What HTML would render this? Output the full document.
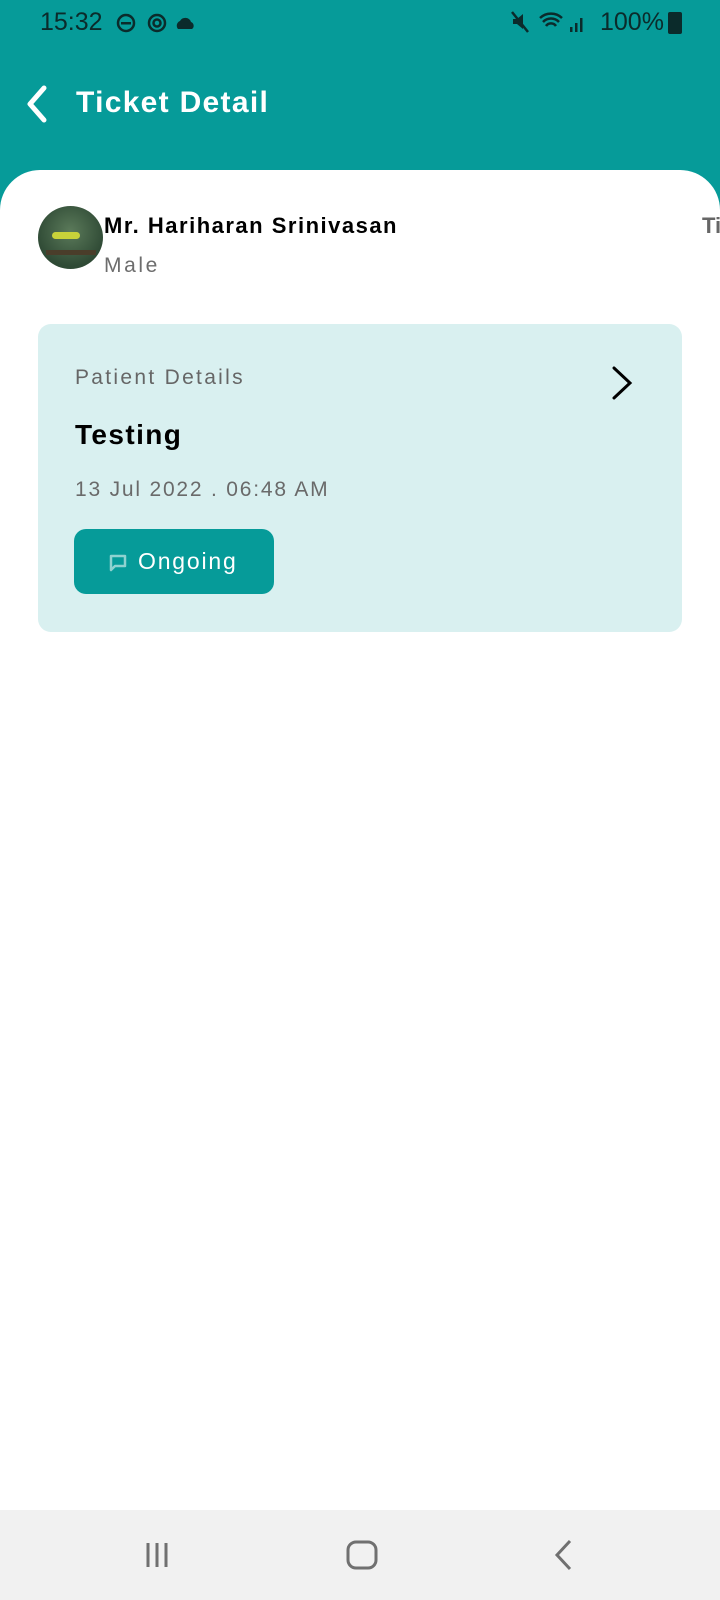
<!DOCTYPE html>
<html><head><meta charset="utf-8"><style>
*{margin:0;padding:0;box-sizing:border-box}
body{width:720px;height:1600px;position:relative;background:#fff;font-family:"Liberation Sans",sans-serif;overflow:hidden}
.top{position:absolute;left:0;top:0;width:720px;height:220px;background:#069b99}
.sheet{position:absolute;left:0;top:170px;width:720px;height:1340px;background:#fff;border-radius:40px 40px 0 0}
.abs{position:absolute;white-space:nowrap}
</style></head><body>
<div class="top"></div>
<div class="abs" style="left:40px;top:8px;font-size:25px;color:#0b2b2b">15:32</div>
<svg class="abs" style="left:115px;top:12px" width="90" height="24" viewBox="0 0 90 24">
<circle cx="11" cy="11" r="8" fill="none" stroke="#0b2b2b" stroke-width="2.5"/><rect x="6" y="10" width="10" height="2.5" fill="#0b2b2b"/>
<circle cx="42" cy="11" r="8" fill="none" stroke="#0b2b2b" stroke-width="2.5"/><circle cx="42" cy="11" r="3.5" fill="none" stroke="#0b2b2b" stroke-width="2.5"/>
<path d="M63 17 a5 5 0 0 1 2-8 a6 6 0 0 1 11 1 a4 4 0 0 1 1 7z" fill="#0b2b2b"/></svg>
<svg class="abs" style="left:510px;top:10px" width="80" height="26" viewBox="0 0 80 26">
<path d="M3 9h4l6-5v15l-6-5H3z" fill="#0b2b2b"/><path d="M2 2l16 20" stroke="#0b2b2b" stroke-width="2.5"/>
<path d="M30 8a16 16 0 0 1 22 0M33 12a11 11 0 0 1 16 0M36 16a6 6 0 0 1 10 0" stroke="#0b2b2b" stroke-width="2.5" fill="none"/>
<rect x="60" y="17" width="2.5" height="5" fill="#0b2b2b"/><rect x="65" y="13" width="2.5" height="9" fill="#0b2b2b"/><rect x="70" y="8" width="2.5" height="14" fill="#0b2b2b"/></svg>
<div class="abs" style="left:600px;top:8px;font-size:25px;color:#0b2b2b">100%</div>
<div class="abs" style="left:668px;top:12px;width:14px;height:22px;background:#0b2b2b;border-radius:2px"></div>
<svg class="abs" style="left:22px;top:84px" width="30" height="40" viewBox="0 0 30 40"><path d="M22 4L8 20l14 16" stroke="#fff" stroke-width="5" fill="none" stroke-linecap="round" stroke-linejoin="round"/></svg>
<div class="abs" style="left:76px;top:86px;font-size:30px;font-weight:bold;color:#fff;letter-spacing:1.3px">Ticket Detail</div>
<div class="sheet"></div>
<div class="abs" style="left:38px;top:206px;width:65px;height:63px;border-radius:50%;background:radial-gradient(circle at 50% 40%,#5b7a5a,#2f4a35 70%)"><div style="position:absolute;left:14px;top:26px;width:28px;height:7px;background:#c8d23a;border-radius:4px"></div><div style="position:absolute;left:8px;top:44px;width:50px;height:5px;background:#4a3d2a"></div></div>
<div class="abs" style="left:104px;top:213px;font-size:22px;font-weight:bold;color:#000;letter-spacing:1.5px">Mr. Hariharan Srinivasan</div>
<div class="abs" style="left:104px;top:254px;font-size:21px;color:#6d6d6d;letter-spacing:2.6px">Male</div>
<div class="abs" style="left:702px;top:213px;font-size:22px;font-weight:bold;color:#666">Ti</div>
<div class="abs" style="left:38px;top:324px;width:644px;height:308px;background:#d9f0f0;border-radius:13px"></div>
<div class="abs" style="left:75px;top:366px;font-size:21px;color:#666;letter-spacing:2.3px">Patient Details</div>
<svg class="abs" style="left:608px;top:364px" width="32" height="38" viewBox="0 0 32 38"><path d="M6 4l16 15L6 34" stroke="#000" stroke-width="3" fill="none" stroke-linecap="round"/></svg>
<div class="abs" style="left:75px;top:419px;font-size:28px;font-weight:bold;color:#000;letter-spacing:1.4px">Testing</div>
<div class="abs" style="left:75px;top:478px;font-size:21px;color:#6a6a6a;letter-spacing:1.8px">13 Jul 2022 . 06:48 AM</div>
<div class="abs" style="left:74px;top:529px;width:200px;height:65px;background:#069b99;border-radius:12px"></div>
<svg class="abs" style="left:108px;top:553px" width="20" height="20" viewBox="0 0 20 20"><path d="M3 3h14v10H7l-4 4z" fill="none" stroke="#8fd2d0" stroke-width="2.5" stroke-linejoin="round"/></svg>
<div class="abs" style="left:138px;top:548px;font-size:23px;color:#fff;letter-spacing:1.8px">Ongoing</div>
<div class="abs" style="left:0;top:1510px;width:720px;height:90px;background:#f1f1f1"></div>
<svg class="abs" style="left:140px;top:1535px" width="460" height="40" viewBox="0 0 460 40">
<path d="M8 8v24M17 8v24M26 8v24" stroke="#707070" stroke-width="3"/>
<rect x="208" y="7" width="28" height="26" rx="8" fill="none" stroke="#707070" stroke-width="3"/>
<path d="M430 6l-13 14 13 14" stroke="#707070" stroke-width="3" fill="none"/></svg>
</body></html>
